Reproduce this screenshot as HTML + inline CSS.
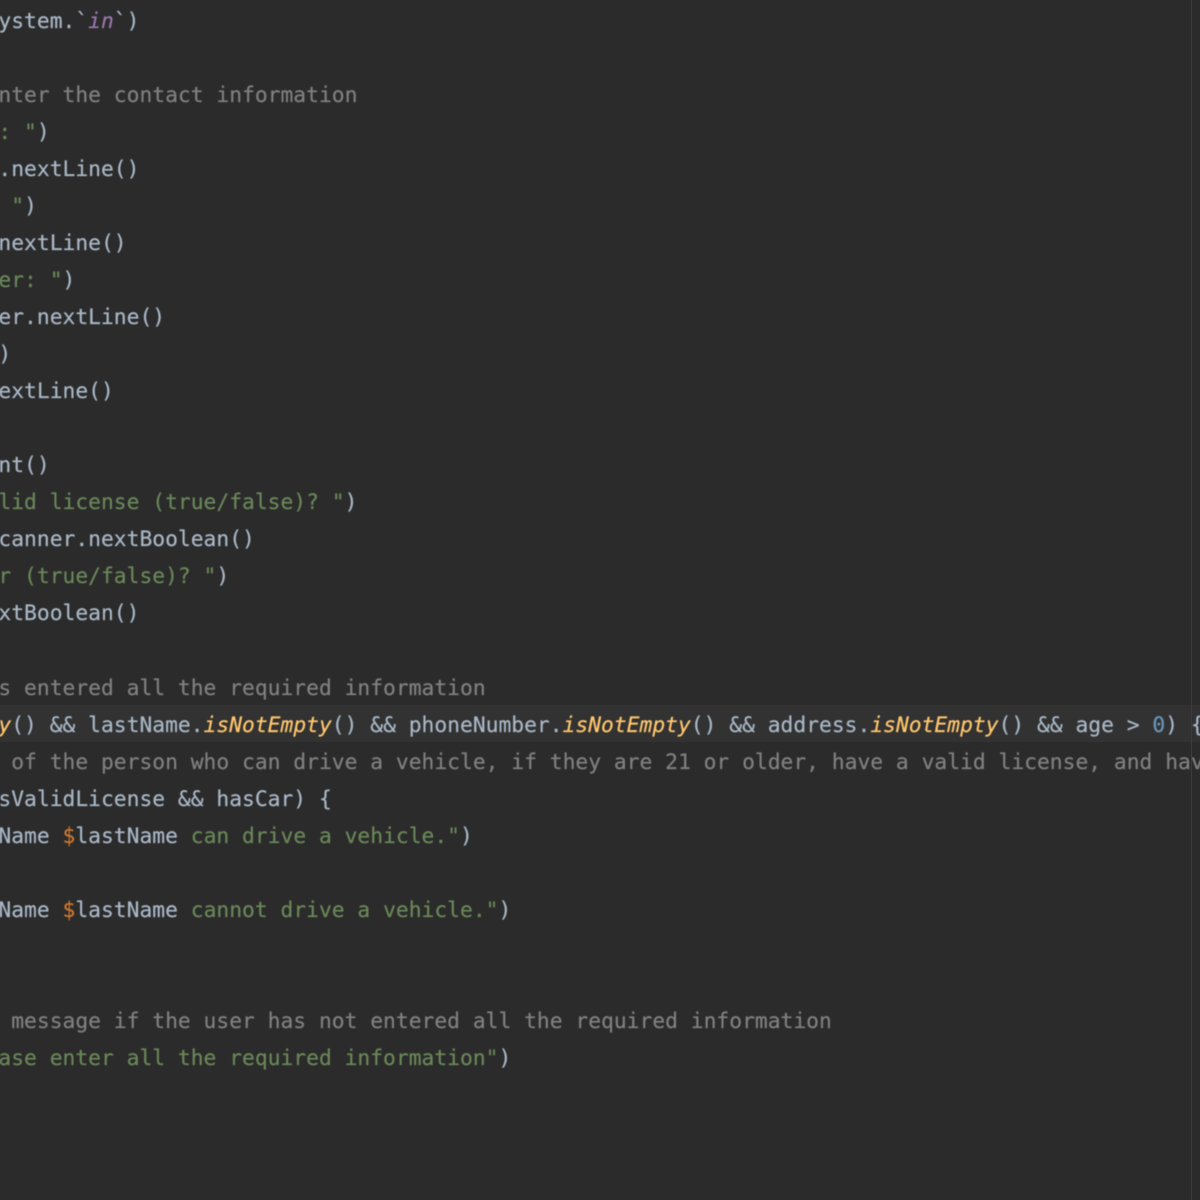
<!DOCTYPE html>
<html><head><meta charset="utf-8">
<style>
html,body{margin:0;padding:0;background:#2b2b2b}
#w{position:relative;width:1200px;height:1200px;overflow:hidden;background:#2b2b2b}
#hl{position:absolute;left:0;top:705px;width:1200px;height:37px;background:#323232}
#g{position:absolute;left:1191px;top:0;width:1px;height:1200px;background:#3c3c3c}
#t{position:absolute;left:0;top:2px;width:1200px;height:1198px;filter:blur(.4px)}
.l{position:absolute;left:-1.6px;white-space:pre;height:37px;line-height:37px;font-family:"DejaVu Sans Mono","Liberation Mono",monospace;font-size:21.3px;color:#a9b7c6;-webkit-text-stroke:.2px currentColor}
.c{color:#808080}.s{color:#6a8759}.d{color:#cc7832}.f{color:#ffc66d;font-style:italic}.n{color:#6897bb}.v{color:#9876aa;font-style:italic}
</style></head><body>
<div id="w">
<div id="hl"></div><div id="g"></div>
<div id="t">
<div class="l" style="top:1px">ystem.`<span class="v">in</span>`)</div>
<div class="l c" style="top:75px">nter the contact information</div>
<div class="l" style="top:112px"><span class="s">: "</span>)</div>
<div class="l" style="top:149px">.nextLine()</div>
<div class="l" style="top:186px"><span class="s"> "</span>)</div>
<div class="l" style="top:223px">nextLine()</div>
<div class="l" style="top:260px"><span class="s">er: "</span>)</div>
<div class="l" style="top:297px">er.nextLine()</div>
<div class="l" style="top:334px">)</div>
<div class="l" style="top:371px">extLine()</div>
<div class="l" style="top:445px">nt()</div>
<div class="l" style="top:482px"><span class="s">lid license (true/false)? "</span>)</div>
<div class="l" style="top:519px">canner.nextBoolean()</div>
<div class="l" style="top:556px"><span class="s">r (true/false)? "</span>)</div>
<div class="l" style="top:593px">xtBoolean()</div>
<div class="l c" style="top:668px">s entered all the required information</div>
<div class="l" style="top:705px"><span class="f">y</span>() &amp;&amp; lastName.<span class="f">isNotEmpty</span>() &amp;&amp; phoneNumber.<span class="f">isNotEmpty</span>() &amp;&amp; address.<span class="f">isNotEmpty</span>() &amp;&amp; age &gt; <span class="n">0</span>) {</div>
<div class="l c" style="top:742px"> of the person who can drive a vehicle, if they are 21 or older, have a valid license, and have</div>
<div class="l" style="top:779px">sValidLicense &amp;&amp; hasCar) {</div>
<div class="l" style="top:816px">Name <span class="d">$</span>lastName <span class="s">can drive a vehicle."</span>)</div>
<div class="l" style="top:890px">Name <span class="d">$</span>lastName <span class="s">cannot drive a vehicle."</span>)</div>
<div class="l c" style="top:1001px"> message if the user has not entered all the required information</div>
<div class="l" style="top:1038px"><span class="s">ase enter all the required information"</span>)</div>
</div>
</div>
</body></html>
